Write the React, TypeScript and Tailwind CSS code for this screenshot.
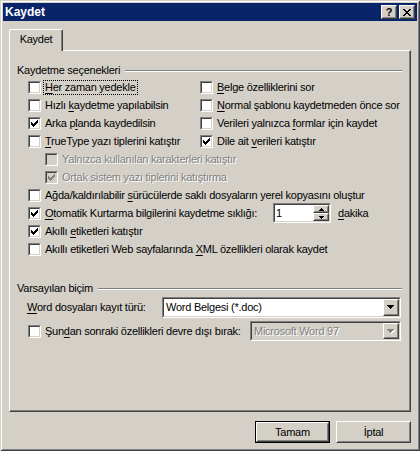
import React from "react"

const CHECK =
  "M0 2h1v3H0z M1 3h1v3H1z M2 4h1v3H2z M3 3h1v3H3z M4 2h1v3H4z M5 1h1v3H5z M6 0h1v3H6z"
const DOWN = "M0 0h7v1H0z M1 1h5v1H1z M2 2h3v1H2z M3 3h1v1H3z"
const CLOSE =
  "M0 0h2v1H0z M6 0h2v1H6z M1 1h2v1H1z M5 1h2v1H5z M2 2h4v1H2z M3 3h2v1H3z M2 4h4v1H2z M1 5h2v1H1z M5 5h2v1H5z M0 6h2v1H0z M6 6h2v1H6z"
const SPIN_UP = "M2 0h1v1H2z M1 1h3v1H1z M0 2h5v1H0z"
const SPIN_DOWN = "M0 0h5v1H0z M1 1h3v1H1z M2 2h1v1H2z"

function Box({ checked, disabled }: { checked?: boolean; disabled?: boolean }) {
  return (
    <span className="flex w-[13px] h-[13px] shrink-0 border border-t-[#808080] border-l-[#808080] border-r-white border-b-white">
      <span
        className={
          disabled
            ? "flex w-full h-full border border-t-[#404040] border-l-[#404040] border-r-[#d4d0c8] border-b-[#d4d0c8] bg-[#d4d0c8]"
            : "flex w-full h-full border border-t-[#404040] border-l-[#404040] border-r-[#d4d0c8] border-b-[#d4d0c8] bg-white"
        }
      >
        {checked && (
          <svg width="7" height="7" viewBox="0 0 7 7" shapeRendering="crispEdges" className="m-[1px]">
            <path d={CHECK} fill={disabled ? "#808080" : "#000000"} />
          </svg>
        )}
      </span>
    </span>
  )
}

function Raised({ className, children }: { className?: string; children?: React.ReactNode }) {
  return (
    <div className={`flex border border-t-white border-l-white border-r-[#404040] border-b-[#404040] bg-[#d4d0c8] ${className ?? ""}`}>
      <div className="flex flex-1 items-center justify-center border border-t-[#d4d0c8] border-l-[#d4d0c8] border-r-[#808080] border-b-[#808080]">
        {children}
      </div>
    </div>
  )
}

function Check({
  checked,
  disabled,
  focus,
  children,
}: {
  checked?: boolean
  disabled?: boolean
  focus?: boolean
  children: React.ReactNode
}) {
  return (
    <div className="flex items-center h-[18px]">
      <Box checked={checked} disabled={disabled} />
      <span
        className={
          disabled
            ? "ml-[4px] whitespace-nowrap text-[#808080] [text-shadow:1px_1px_0_#ffffff]"
            : focus
              ? "ml-[4px] whitespace-nowrap outline-1 outline-dotted outline-black outline-offset-[1px]"
              : "ml-[4px] whitespace-nowrap"
        }
      >
        {children}
      </span>
    </div>
  )
}

function U({ children }: { children: React.ReactNode }) {
  return <u className="underline-offset-[2px]">{children}</u>
}

function Heading({ children }: { children: React.ReactNode }) {
  return (
    <div className="flex items-center h-[15px]">
      <span className="whitespace-nowrap">{children}</span>
      <div className="flex-1 ml-[5px] h-[2px] border-t border-t-[#808080] border-b border-b-white" />
    </div>
  )
}

function Combo({ value, disabled, className }: { value: string; disabled?: boolean; className: string }) {
  return (
    <div className={`flex border border-t-[#808080] border-l-[#808080] border-r-white border-b-white ${className}`}>
      <div
        className={
          disabled
            ? "flex flex-1 items-center border border-t-[#404040] border-l-[#404040] border-r-[#d4d0c8] border-b-[#d4d0c8] bg-[#d4d0c8]"
            : "flex flex-1 items-center border border-t-[#404040] border-l-[#404040] border-r-[#d4d0c8] border-b-[#d4d0c8] bg-white"
        }
      >
        <span
          className={
            disabled
              ? "flex-1 pl-[2px] whitespace-nowrap text-[#808080] [text-shadow:1px_1px_0_#ffffff]"
              : "flex-1 pl-[2px] whitespace-nowrap"
          }
        >
          {value}
        </span>
        <Raised className="w-[16px] h-full">
          <svg width="8" height="5" viewBox="0 0 8 5" shapeRendering="crispEdges">
            {disabled && <path d={DOWN} fill="#ffffff" transform="translate(1 1)" />}
            <path d={DOWN} fill={disabled ? "#808080" : "#000000"} />
          </svg>
        </Raised>
      </div>
    </div>
  )
}

export default function App() {
  return (
    <div className="w-[420px] h-[451px] bg-[#d4d0c8] p-[3px] flex flex-col font-['Liberation_Sans',Arial,sans-serif] text-[11px] tracking-[-0.25px] leading-none text-black select-none shadow-[inset_1px_1px_0_#d4d0c8,inset_-1px_-1px_0_#404040,inset_2px_2px_0_#ffffff,inset_-2px_-2px_0_#808080]">
      {/* title bar */}
      <div className="h-[18px] bg-[#0a246a] flex items-center pl-[2px] pr-[2px]">
        <span className="text-white font-bold text-[12px] tracking-normal flex-1">Kaydet</span>
        <Raised className="w-[16px] h-[14px]">
          <span className="font-bold text-[11px] leading-none">?</span>
        </Raised>
        <Raised className="w-[16px] h-[14px] ml-[2px]">
          <svg width="8" height="7" viewBox="0 0 8 7" shapeRendering="crispEdges">
            <path d={CLOSE} fill="#000000" />
          </svg>
        </Raised>
      </div>

      <div className="px-[6px] pt-[8px] flex flex-col">
        {/* tab */}
        <div className="flex h-[21px]">
          <div className="relative z-10 w-[54px] h-[22px] flex items-center justify-center rounded-t-[2px] bg-[#d4d0c8] border-t border-l border-t-white border-l-white border-r border-r-[#404040] shadow-[inset_-1px_0_0_#808080]">
            <span className="pb-[2px]">Kaydet</span>
          </div>
        </div>

        {/* panel */}
        <div className="h-[362px] flex flex-col border border-t-white border-l-white border-r-[#404040] border-b-[#404040] shadow-[inset_-1px_-1px_0_#808080] px-[7px] pt-[12px] pr-[8px]">
          <Heading>Kaydetme seçenekleri</Heading>
          <div className="ml-[11px] flex flex-col">
            <div className="grid grid-cols-[172px_1fr]">
              <Check focus>
                <U>H</U>er zaman yedekle
              </Check>
              <Check>
                <U>B</U>elge özelliklerini sor
              </Check>
              <Check>
                Hızlı <U>k</U>aydetme yapılabilsin
              </Check>
              <Check>
                <U>N</U>ormal şablonu kaydetmeden önce sor
              </Check>
              <Check checked>
                Arka p<U>l</U>anda kaydedilsin
              </Check>
              <Check>
                Verileri yalnızca <U>f</U>ormlar için kaydet
              </Check>
              <Check>
                <U>T</U>rueType yazı tiplerini katıştır
              </Check>
              <Check checked>
                Dile ait <U>v</U>erileri katıştır
              </Check>
            </div>
            <div className="pl-[17px] flex flex-col">
              <Check disabled>Yalnızca kullanılan karakterleri katıştır</Check>
              <Check disabled checked>
                Ortak sistem yazı tiplerini katıştırma
              </Check>
            </div>
            <Check>
              Ağda/kaldırılabilir <U>s</U>ürücülerde saklı dosyaların yerel kopyasını oluştur
            </Check>
            <div className="flex items-center h-[18px]">
              <Box checked />
              <span className="ml-[4px] w-[228px] whitespace-nowrap">
                <U>O</U>tomatik Kurtarma bilgilerini kaydetme sıklığı:
              </span>
              <div className="flex w-[58px] h-[20px] shrink-0 border border-t-[#808080] border-l-[#808080] border-r-white border-b-white">
                <div className="flex flex-1 items-center border border-t-[#404040] border-l-[#404040] border-r-[#d4d0c8] border-b-[#d4d0c8] bg-white">
                  <span className="flex-1 pl-[1px]">1</span>
                  <div className="flex flex-col w-[16px] h-full">
                    <Raised className="flex-1">
                      <svg width="5" height="3" viewBox="0 0 5 3" shapeRendering="crispEdges">
                        <path d={SPIN_UP} fill="#000000" />
                      </svg>
                    </Raised>
                    <Raised className="flex-1">
                      <svg width="5" height="3" viewBox="0 0 5 3" shapeRendering="crispEdges">
                        <path d={SPIN_DOWN} fill="#000000" />
                      </svg>
                    </Raised>
                  </div>
                </div>
              </div>
              <span className="ml-[7px]">
                <U>d</U>akika
              </span>
            </div>
            <Check checked>
              Akıllı <U>e</U>tiketleri katıştır
            </Check>
            <Check>
              Akıllı etiketleri Web sayfalarında <U>X</U>ML özellikleri olarak kaydet
            </Check>
          </div>

          <div className="mt-[23px]">
            <Heading>Varsayılan biçim</Heading>
          </div>
          <div className="flex items-center mt-[1px] ml-[10px]">
            <span className="w-[135px] whitespace-nowrap">
              <U>W</U>ord dosyaları kayıt türü:
            </span>
            <Combo value="Word Belgesi (*.doc)" className="w-[239px] h-[21px]" />
          </div>
          <div className="flex items-center mt-[3px] ml-[11px]">
            <Box />
            <span className="ml-[4px] w-[205px] whitespace-nowrap">
              Şun<U>d</U>an sonraki özellikleri devre dışı bırak:
            </span>
            <Combo value="Microsoft Word 97" disabled className="w-[151px] h-[20px]" />
          </div>
        </div>

        {/* buttons */}
        <div className="flex justify-end gap-[6px] mt-[9px]">
          <div className="border border-black">
            <Raised className="w-[73px] h-[20px]">Tamam</Raised>
          </div>
          <Raised className="w-[75px] h-[22px]">İptal</Raised>
        </div>
      </div>
    </div>
  )
}
